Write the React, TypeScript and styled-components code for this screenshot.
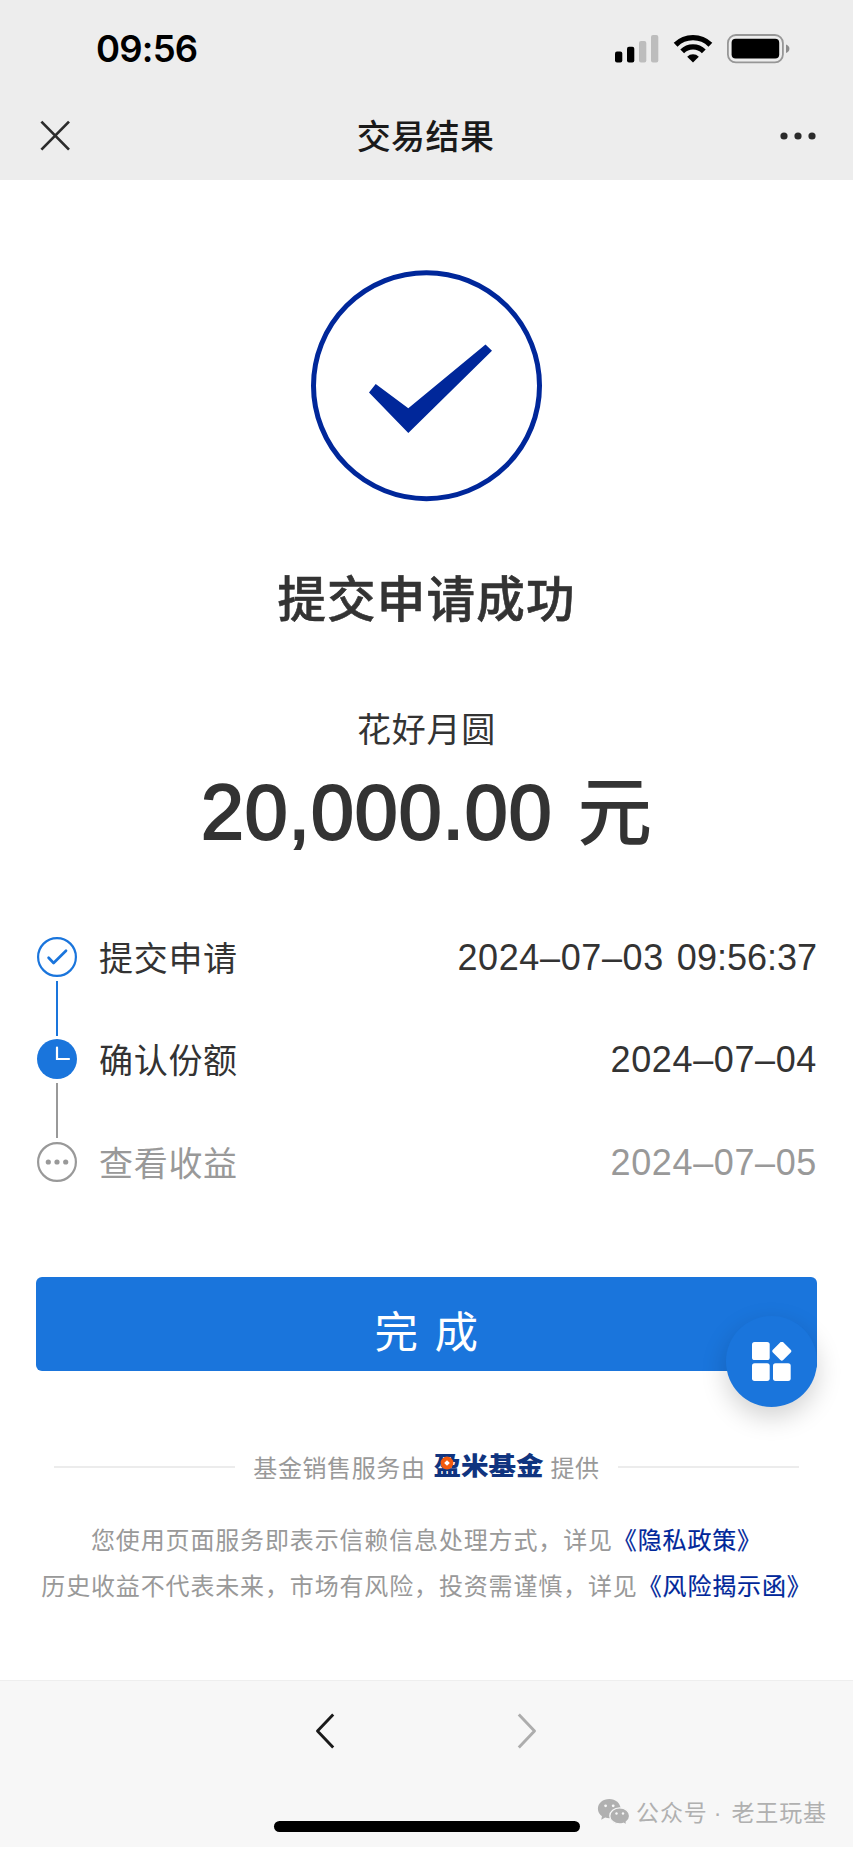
import React from "react";
import styled, { createGlobalStyle } from "styled-components";

const navy = "#00279a";
const blue = "#1a75dc";
const ink = "#333333";
const muted = "#999999";

const latin = `"Liberation Sans", "Noto Sans CJK SC", sans-serif`;
const cjk = `"Noto Sans CJK SC", sans-serif`;

const GlobalStyle = createGlobalStyle`
  * { box-sizing: border-box; }
  body { margin: 0; background: #ffffff; }
  svg { display: block; flex: none; }
`;

const Page = styled.div`
  width: 853px;
  height: 1850px;
  display: flex;
  flex-direction: column;
  background: #ffffff;
  color: ${ink};
  font-family: ${cjk};
`;

const Header = styled.header`
  height: 180px;
  background: #ededed;
`;

const StatusBar = styled.div`
  height: 98px;
  padding: 0 63px 0 96px;
  display: flex;
  align-items: center;
  justify-content: space-between;
`;

const StatusIcons = styled.div`
  display: flex;
  gap: 14px;
  margin-top: -1px;
`;

const Clock = styled.span`
  font: 600 36.5px/98px Inter, sans-serif;
  letter-spacing: -0.8px;
  color: #000000;
`;

const TitleBar = styled.div`
  height: 75px;
  padding: 0 37px 0 38px;
  display: grid;
  grid-template-columns: 1fr auto 1fr;
  align-items: center;

  & > :last-child { justify-self: end; }
`;

const Title = styled.h1`
  margin: 0 3px 0 0;
  font: 500 34px/75px ${cjk};
  letter-spacing: 0.4px;
  color: #1a1a1a;
  transform: translateY(-1px);
`;

const Content = styled.main`
  flex: 1;
  display: flex;
  flex-direction: column;
  align-items: center;
  padding-top: 90px;
`;

const Heading = styled.h2`
  margin: 59px 0 0;
  font: 500 48.5px/70px ${cjk};
  letter-spacing: 1.2px;
  -webkit-text-stroke: 0.6px ${ink};
`;

const ProductName = styled.p`
  margin: 71px 0 0;
  font: 400 34px/52px ${cjk};
  letter-spacing: 0.8px;
`;

const Amount = styled.div`
  height: 100px;
  margin-top: 3px;
  display: flex;
  align-items: baseline;
  gap: 25px;
`;

const AmountDigits = styled.span`
  font: 400 77px/100px ${latin};
  letter-spacing: 1px;
  -webkit-text-stroke: 2.2px ${ink};
`;

const AmountUnit = styled.span`
  font: 500 74.5px/100px ${cjk};
`;

const Steps = styled.ol`
  list-style: none;
  width: 100%;
  margin: 79.5px 0 0;
  padding: 0 36px 0 37.4px;
`;

const Step = styled.li<{ $pending?: boolean }>`
  height: 102.5px;
  display: flex;
  align-items: flex-start;
  color: ${(p) => (p.$pending ? muted : ink)};

  &:last-child { height: 42px; }
`;

const StepTrack = styled.div`
  width: 40px;
  display: flex;
  flex-direction: column;
  align-items: center;
  gap: 4px;
`;

const StepLine = styled.span<{ $color: string }>`
  width: 2px;
  height: 55px;
  background: ${(p) => p.$color};
`;

const StepLabel = styled.span`
  flex: 1;
  margin-left: 21.6px;
  font: 400 34px/40px ${cjk};
  letter-spacing: 0.7px;
`;

const StepWhen = styled.time`
  display: flex;
  gap: 13px;
  font: 400 36px/42px ${latin};
`;

const StepDate = styled.span`
  letter-spacing: 0.62px;
`;

const StepTime = styled.span`
  letter-spacing: 0;
`;

const Actions = styled.div`
  position: relative;
  width: 781px;
  margin-top: 93.5px;
`;

const DoneButton = styled.button`
  display: block;
  width: 100%;
  height: 94px;
  padding: 12px 0 0;
  border: 0;
  border-radius: 6px;
  background: ${blue};
  color: #ffffff;
  font: 400 43.5px/82px ${cjk};
  letter-spacing: 3.4px;
  text-indent: 3px;
`;

const FloatingButton = styled.button`
  position: absolute;
  right: 0;
  top: 39px;
  width: 91px;
  height: 91px;
  padding: 0;
  border: 0;
  border-radius: 50%;
  background: ${blue};
  box-shadow: 0 10px 26px rgba(0, 0, 0, 0.18);
  display: grid;
  place-items: center;
`;

const Provider = styled.div`
  width: 745px;
  height: 36px;
  margin-top: 78px;
  display: flex;
  align-items: center;
  font: 400 24px/34px ${cjk};
  letter-spacing: 0.6px;
  color: ${muted};
`;

const Rule = styled.span`
  flex: 1;
  height: 2px;
  background: #ececec;
`;

const ProviderText = styled.span<{ $before: number; $after: number }>`
  margin: 0 ${(p) => p.$after}px 0 ${(p) => p.$before}px;
`;

const Brand = styled.span`
  position: relative;
  width: 111px;
  height: 36px;
  font: 900 27.5px/36px ${cjk};
  letter-spacing: 0;
  white-space: nowrap;
  color: #10347f;
`;

const BrandText = styled.span`
  display: block;
  transform: translateY(-3px) scaleY(0.9);
`;

const BrandMark = styled.svg`
  position: absolute;
  left: 6px;
  top: 6.5px;
`;

const Legal = styled.p`
  margin: 31px 0 0;
  font: 400 24px/46px ${cjk};
  letter-spacing: 0.85px;
  text-align: center;
  white-space: nowrap;
  color: ${muted};
`;

const LegalLink = styled.a`
  color: ${navy};
  -webkit-text-stroke: 0.2px ${navy};
`;

const BottomBar = styled.footer`
  position: relative;
  height: 167px;
  margin-bottom: 3px;
  border-top: 1px solid #eeeeee;
  background: #f7f7f7;
  display: flex;
  flex-direction: column;
  align-items: center;
`;

const HistoryNav = styled.nav`
  height: 99px;
  width: 222px;
  margin-right: 2px;
  display: flex;
  align-items: center;
  justify-content: space-between;
`;

const HomeIndicator = styled.span`
  width: 306px;
  height: 11px;
  margin-top: 40.5px;
  border-radius: 6px;
  background: #000000;
`;

const Watermark = styled.div`
  position: absolute;
  left: 597px;
  top: 114px;
  height: 34px;
  display: flex;
  align-items: center;
  font: 400 23px/34px ${cjk};
  letter-spacing: 0.9px;
  white-space: nowrap;
  color: #b0b0b0;
`;

const WatermarkText = styled.span`
  margin-left: 5px;
`;

const Dot = styled.span`
  margin-right: 3px;
  font-family: "Liberation Sans", sans-serif;
`;

const SignalIcon = () => (
  <svg width="44" height="30" viewBox="0 0 44 30">
    <rect x="0" y="17.5" width="7.3" height="11" rx="2" fill="#000" />
    <rect x="12" y="12.7" width="7.3" height="15.8" rx="2" fill="#000" />
    <rect x="24" y="7" width="7.3" height="21.5" rx="2" fill="#bdbdbd" />
    <rect x="36" y="1" width="7.3" height="27.5" rx="2" fill="#bdbdbd" />
  </svg>
);

const WifiIcon = () => (
  <svg width="40" height="30" viewBox="0 0 40 30">
    <g fill="none" stroke="#000" strokeWidth="5.4">
      <path d="M2.6 10.7A24.9 24.9 0 0 1 37.4 10.7" />
      <path d="M9.2 17.3A15.4 15.4 0 0 1 30.8 17.3" />
    </g>
    <path d="M20 28.6L14.2 22.7A8.2 8.2 0 0 1 25.8 22.7Z" fill="#000" />
  </svg>
);

const BatteryIcon = () => (
  <svg width="63" height="30" viewBox="0 0 63 30">
    <rect x="0.9" y="1" width="55" height="27.4" rx="8" fill="none" stroke="#979797" strokeWidth="1.8" />
    <rect x="4.6" y="4.8" width="47.6" height="19.8" rx="4" fill="#000" />
    <path d="M59 10.4Q62.4 11.6 62.4 14.7T59 19Z" fill="#8c8c8c" />
  </svg>
);

const CloseIcon = () => (
  <svg width="34" height="34" viewBox="0 0 34 34" fill="none" stroke="#2b2b2b" strokeWidth="2.7">
    <path d="M3.4 2.6L31 30.6M31 2.6L3.4 30.6" />
  </svg>
);

const MoreIcon = () => (
  <svg width="36" height="8" viewBox="0 0 36 8" fill="#2b2b2b">
    <circle cx="4" cy="4" r="3.6" />
    <circle cx="18" cy="4" r="3.6" />
    <circle cx="32" cy="4" r="3.6" />
  </svg>
);

const SuccessIcon = () => (
  <svg width="231" height="232" viewBox="0 0 231 232">
    <circle cx="115.5" cy="115.7" r="113" fill="none" stroke={navy} strokeWidth="5" />
    <path d="M174.5 74.6L181 80.7L97.3 163L58 122.6L64.7 114L97.3 138.3Z" fill={navy} />
  </svg>
);

const StepDoneIcon = () => (
  <svg width="40" height="40" viewBox="0 0 40 40" fill="none" stroke={blue}>
    <circle cx="20" cy="20" r="18.9" strokeWidth="2.2" />
    <path d="M11.6 20.8L16.6 26L29 13.8" strokeWidth="2.7" strokeLinecap="round" strokeLinejoin="round" />
  </svg>
);

const StepActiveIcon = () => (
  <svg width="40" height="40" viewBox="0 0 40 40">
    <circle cx="20" cy="20" r="20" fill={blue} />
    <path d="M20 8.5V20H32" fill="none" stroke="#fff" strokeWidth="2.2" strokeLinecap="round" />
  </svg>
);

const StepPendingIcon = () => (
  <svg width="40" height="40" viewBox="0 0 40 40" fill={muted}>
    <circle cx="20" cy="20" r="18.9" fill="none" stroke={muted} strokeWidth="2.2" />
    <circle cx="11.3" cy="20" r="2.6" />
    <circle cx="20" cy="20" r="2.6" />
    <circle cx="28.7" cy="20" r="2.6" />
  </svg>
);

const AppsIcon = () => (
  <svg width="40" height="40" viewBox="0 0 40 40" fill="#fff">
    <rect x="0" y="0" width="17.7" height="18" rx="2.6" />
    <rect x="0" y="21.2" width="17.7" height="17.7" rx="2.6" />
    <rect x="21" y="21.2" width="17.7" height="17.7" rx="2.6" />
    <rect x="22.5" y="1.8" width="14.6" height="14.6" rx="2" transform="rotate(45 29.8 9.1)" />
  </svg>
);

const Chevron = ({ d, color }: { d: string; color: string }) => (
  <svg width="20" height="36" viewBox="0 0 20 36" fill="none" stroke={color} strokeWidth="2.9" strokeLinejoin="round">
    <path d={d} />
  </svg>
);

const WechatIcon = () => (
  <svg width="34" height="28" viewBox="0 0 34 28">
    <path
      d="M12.3 1C5.9 1 .9 5.2.9 10.7c0 3.1 1.6 5.7 4.1 7.5L4.2 21.8l4-2.2c1.3.4 2.7.6 4.1.6 6.3 0 11.3-4.2 11.3-9.5S18.6 1 12.3 1Z"
      fill="#b0b0b0"
    />
    <path
      d="M22.7 9.8c5.5 0 9.9 3.6 9.9 8.1 0 2.5-1.3 4.6-3.4 6.1l.6 3.1-3.4-1.8c-1.1.4-2.4.6-3.7.6-5.5 0-9.9-3.5-9.9-8s4.4-8.1 9.9-8.1Z"
      fill="#b0b0b0"
      stroke="#f7f7f7"
      strokeWidth="1.3"
    />
    <g fill="#f7f7f7">
      <circle cx="8.6" cy="7.8" r="1.4" />
      <circle cx="16.2" cy="7.8" r="1.4" />
      <circle cx="19.5" cy="15.5" r="1.2" />
      <circle cx="26" cy="15.5" r="1.2" />
    </g>
  </svg>
);

export default function App() {
  return (
    <Page>
      <GlobalStyle />
      <Header>
        <StatusBar>
          <Clock>09:56</Clock>
          <StatusIcons>
            <SignalIcon />
            <WifiIcon />
            <BatteryIcon />
          </StatusIcons>
        </StatusBar>
        <TitleBar>
          <CloseIcon />
          <Title>交易结果</Title>
          <MoreIcon />
        </TitleBar>
      </Header>

      <Content>
        <SuccessIcon />
        <Heading>提交申请成功</Heading>
        <ProductName>花好月圆</ProductName>
        <Amount>
          <AmountDigits>20,000.00</AmountDigits>
          <AmountUnit>元</AmountUnit>
        </Amount>

        <Steps>
          <Step>
            <StepTrack>
              <StepDoneIcon />
              <StepLine $color={blue} />
            </StepTrack>
            <StepLabel>提交申请</StepLabel>
            <StepWhen>
              <StepDate>2024–07–03</StepDate>
              <StepTime>09:56:37</StepTime>
            </StepWhen>
          </Step>
          <Step>
            <StepTrack>
              <StepActiveIcon />
              <StepLine $color={muted} />
            </StepTrack>
            <StepLabel>确认份额</StepLabel>
            <StepWhen>
              <StepDate>2024–07–04</StepDate>
            </StepWhen>
          </Step>
          <Step $pending>
            <StepTrack>
              <StepPendingIcon />
            </StepTrack>
            <StepLabel>查看收益</StepLabel>
            <StepWhen>
              <StepDate>2024–07–05</StepDate>
            </StepWhen>
          </Step>
        </Steps>

        <Actions>
          <DoneButton>完 成</DoneButton>
          <FloatingButton aria-label="apps">
            <AppsIcon />
          </FloatingButton>
        </Actions>

        <Provider>
          <Rule />
          <ProviderText $before={18} $after={8}>基金销售服务由</ProviderText>
          <Brand>
            <BrandText>盈米基金</BrandText>
            <BrandMark width="14" height="14" viewBox="0 0 14 14">
              <circle cx="7" cy="7" r="6.4" fill="#f25a0e" />
              <rect x="5" y="5" width="4" height="4" fill="#fff" transform="rotate(45 7 7)" />
            </BrandMark>
          </Brand>
          <ProviderText $before={6} $after={18}>提供</ProviderText>
          <Rule />
        </Provider>

        <Legal>
          您使用页面服务即表示信赖信息处理方式，详见<LegalLink>《隐私政策》</LegalLink>
          <br />
          历史收益不代表未来，市场有风险，投资需谨慎，详见<LegalLink>《风险揭示函》</LegalLink>
        </Legal>
      </Content>

      <BottomBar>
        <HistoryNav>
          <Chevron d="M18.2 1.5L2.5 18L18.2 34.5" color="#1a1a1a" />
          <Chevron d="M1.8 1.5L17.5 18L1.8 34.5" color="#adadad" />
        </HistoryNav>
        <HomeIndicator />
        <Watermark>
          <WechatIcon />
          <WatermarkText>
            公众号 <Dot>·</Dot> 老王玩基
          </WatermarkText>
        </Watermark>
      </BottomBar>
    </Page>
  );
}
